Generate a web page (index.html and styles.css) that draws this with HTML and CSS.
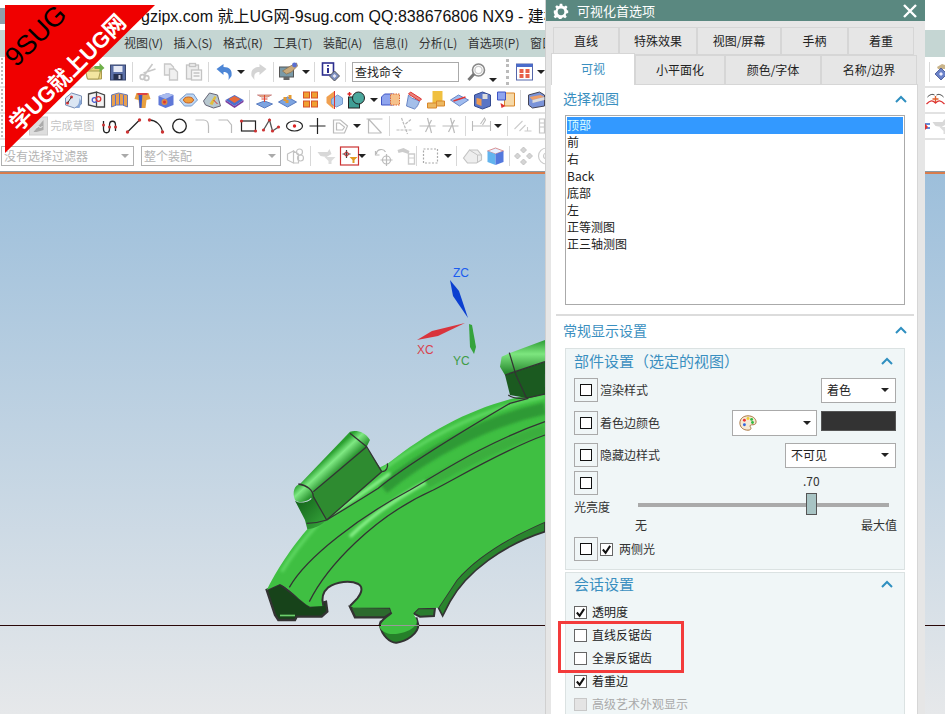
FILE: index.html
```html
<!DOCTYPE html>
<html lang="zh">
<head>
<meta charset="utf-8">
<title>可视化首选项</title>
<link rel="stylesheet" href="styles.css">
</head>
<body>
<svg class="defs" width="0" height="0">
<defs>
<symbol id="folder" viewBox="0 0 20 20"><path d="M1 7h6l2-2h6l2 3v9H3z" fill="#e8d37a" stroke="#a89a50"/><path d="M1 9h15l-2 8H3z" fill="#f3e6a0" stroke="#a89a50"/><path d="M10 4h5V1l5 5-5 4V7h-5z" fill="#6fb04a"/></symbol>
<symbol id="save" viewBox="0 0 20 20"><rect x="3" y="3" width="15" height="15" fill="#5b6fa6" stroke="#39466e"/><rect x="6" y="4" width="9" height="6" fill="#e6e9f4"/><rect x="6" y="12" width="9" height="6" fill="#26304e"/><rect x="11" y="13" width="2" height="4" fill="#ccd"/></symbol>
<symbol id="cut" viewBox="0 0 20 20" fill="none" stroke="#c8c8c8" stroke-width="1.6"><path d="M15 2 7 13M18 7 6 11"/><circle cx="5" cy="15" r="2.4"/><circle cx="9" cy="16" r="2.4"/></symbol>
<symbol id="copy" viewBox="0 0 20 20" fill="#f0f0f0" stroke="#c8c8c8" stroke-width="1.3"><path d="M4 2h6l3 3v8H4z"/><path d="M9 7h5l3 3v8H9z"/></symbol>
<symbol id="paste" viewBox="0 0 20 20" fill="#eee" stroke="#c4c4c4" stroke-width="1.3"><rect x="3" y="3" width="12" height="14"/><rect x="6" y="1.500" width="6" height="3"/><rect x="8" y="8" width="10" height="10" fill="#f8f8f8"/><path d="M10 11h6M10 14h6"/></symbol>
<symbol id="undo" viewBox="0 0 20 20"><path d="M2 7 9 2v3c6 0 9 3 8 9l-3 4c1-6-1-8-5-8v3z" fill="#4d86d6"/></symbol>
<symbol id="redo" viewBox="0 0 20 20"><path d="M18 7 11 2v3C5 5 2 8 3 14l3 4C5 12 7 10 11 10v3z" fill="#d4d4d4"/></symbol>
<symbol id="monitor" viewBox="0 0 20 20"><rect x="1" y="5" width="14" height="10" fill="#7a9aa8" stroke="#555"/><rect x="5" y="15" width="6" height="3" fill="#666"/><path d="M4 9l8-5 6-3 1 3-6 6-5 2z" fill="#c9a97a" stroke="#8a6f4a" stroke-width=".7"/><circle cx="16" cy="3" r="2.400" fill="#5a6fd0"/></symbol>
<symbol id="info" viewBox="0 0 20 20"><rect x="2" y="1" width="11" height="12" fill="#fff" stroke="#2d2f8f" stroke-width="1.6"/><path d="M7.500 3v1.500M7.500 6v5" stroke="#2d2f8f" stroke-width="2"/><path d="M9 14l5-5 5 5-5 5z" fill="#7c8fc0" stroke="#555"/><path d="M12 14l2-2 2 2-2 2z" fill="#e8e8f4"/></symbol>
<symbol id="diam" viewBox="0 0 12 20"><path d="M4 5l5-3 3 1v4H5z" fill="#c9b48a"/><path d="M2 12l6-6 6 6-6 6z" fill="#6a82c8" stroke="#3f4f90" stroke-width=".8"/><path d="M6 12l2-2 2 2-2 2z" fill="#eef"/></symbol>
<symbol id="lens" viewBox="0 0 20 20" fill="none"><circle cx="12" cy="8" r="6" stroke="#888" stroke-width="1.600"/><circle cx="12" cy="8" r="3.600" stroke="#ccc" stroke-width="1.400"/><path d="M7.500 12 2 18" stroke="#777" stroke-width="3"/></symbol>
<symbol id="win" viewBox="0 0 20 20"><rect x="2" y="2" width="16" height="16" fill="#fff" stroke="#5566aa"/><rect x="2" y="2" width="16" height="3" fill="#4a6ccc"/><path d="M5 7h4v4H5zM11 7h4v4h-4zM5 12h4v4H5zM11 12h4v4h-4z" fill="#e8604a"/></symbol>
<symbol id="b1" viewBox="0 0 20 20"><path d="M2 8l6-5 10 3v8l-7 4-9-3z" fill="#dbe6f3" stroke="#7a8fb5"/><circle cx="8" cy="7" r="1.500" fill="#d33"/><circle cx="4" cy="13" r="1.500" fill="#d33"/><path d="M8 7 4 13" stroke="#444"/><path d="M12 18c3-3 4-6 4-10l2 4-2 6z" fill="#88a8d8"/></symbol>
<symbol id="b2" viewBox="0 0 20 20" fill="none" stroke="#444" stroke-width="1.300"><path d="M2 4l8-2v15l-8-2zM10 2l8 3v12l-8-0z" fill="#f3f3f3"/><circle cx="8" cy="10" r="2.300" stroke="#4a5fd0"/><circle cx="12" cy="9" r="2.300" stroke="#d33"/></symbol>
<symbol id="b3" viewBox="0 0 20 20"><path d="M2 5l7-2 9 2v12l-5-2H7l-5 2z" fill="#e8a050" stroke="#6678b5"/><path d="M6 5v10M10 4v11M14 5v10" stroke="#5a6fd0"/></symbol>
<symbol id="b4" viewBox="0 0 20 20"><path d="M4 3h12l2 6-4 1-1 8H7l-1-8-4-1z" fill="#e8a040"/><path d="M6 3h4l-1 15H7z" fill="#3a57c0"/><path d="M5 3h10v2H5z" fill="#d44"/></symbol>
<symbol id="b5" viewBox="0 0 20 20"><path d="M3 6l9-3 6 2v10l-8 3-7-3z" fill="#5f78d8"/><path d="M3 6l7 3 8-4-6-2z" fill="#a9bbee"/><circle cx="9" cy="12" r="3" fill="#d84"/><circle cx="9" cy="12" r="1.500" fill="#d33"/></symbol>
<symbol id="b6" viewBox="0 0 20 20"><path d="M1 10l7-6h7l4 6-6 6H6z" fill="#bcd7f4" stroke="#7799cc"/><ellipse cx="10" cy="10" rx="5" ry="3" fill="#f0a040" stroke="#c86020"/></symbol>
<symbol id="b7" viewBox="0 0 20 20"><path d="M2 11 8 3l8 2 3 11-7 2-8-3z" fill="#b8c8d0" stroke="#667"/><path d="M8 14l5-8 2 1-4 8z" fill="#e0c040"/><path d="M12 10l4 4" stroke="#d33"/></symbol>
<symbol id="b8" viewBox="0 0 20 20"><path d="M1 10l9-5 9 5-9 6z" fill="#4a6fd0"/><path d="M4 9l6-3 6 3-6 4z" fill="#e86a3a"/><path d="M1 10v2l9 6 9-6v-2l-9 6z" fill="#7a3fa0"/></symbol>
<symbol id="b9" viewBox="0 0 20 20"><path d="M2 14l8-3 8 3-8 4z" fill="#7da4e0" stroke="#5a7cc0"/><path d="M3 5h14l-4 2H7z" fill="#f0b070" stroke="#c88"/><path d="M10 5v7M7 9h6" stroke="#d43"/></symbol>
<symbol id="b10" viewBox="0 0 20 20"><path d="M1 12l9-5 9 5-9 5z" fill="#7da4e0" stroke="#5a7cc0"/><path d="M6 7h3v4H6zM11 5h3v4h-3zM8 10h3v3H8z" fill="#e59a30"/></symbol>
<symbol id="b11" viewBox="0 0 20 20" fill="#f0a030" stroke="#d8502a"><rect x="3" y="2" width="6" height="6"/><rect x="11" y="2" width="6" height="6"/><rect x="3" y="11" width="6" height="6"/><rect x="11" y="11" width="6" height="6"/></symbol>
<symbol id="b12" viewBox="0 0 20 20"><path d="M11 1l-1 18-7-6v-6z" fill="#f0a050"/><path d="M8 9l6-4 5 3v6l-6 3-5-3z" fill="#9cc0ec" stroke="#7799cc"/><path d="M11 1v18" stroke="#d33"/></symbol>
<symbol id="b13" viewBox="0 0 20 20"><path d="M3 2v4M1 4h4" stroke="#d22" stroke-width="1.400"/><rect x="2" y="7" width="11" height="11" fill="#3f9d94" stroke="#222"/><circle cx="12" cy="8" r="6" fill="#4aa79c" stroke="#222"/></symbol>
<symbol id="b14" viewBox="0 0 20 20"><path d="M1 7l3-3h9v11H1z" fill="#8ea4ee" stroke="#3f55c5"/><rect x="10" y="4" width="9" height="11" fill="#f6c18a" stroke="#d63" stroke-dasharray="1.500 1"/></symbol>
<symbol id="b15" viewBox="0 0 20 20"><path d="M5 5 3 16l8 3c3-2 4-5 5-8L8 8z" fill="#a4bfea" stroke="#6a86c5"/><path d="M7 2l11 7-2 2L5 4z" fill="#e8837a" stroke="#d33"/></symbol>
<symbol id="b16" viewBox="0 0 20 20"><path d="M6 1h10v12H6z" fill="#f0c040"/><path d="M1 13h9v5H1zM10 11h8v5h-8z" fill="#ecb860" stroke="#d8862a"/></symbol>
<symbol id="b17" viewBox="0 0 20 20"><path d="M1 10l8-5 10 5-9 6z" fill="#9fbcf0" stroke="#6a86c5"/><path d="M4 11l12-4" stroke="#d33" stroke-width="1.600"/></symbol>
<symbol id="b18" viewBox="0 0 20 20"><path d="M2 5l8-3 8 3v11l-8 3-8-3z" fill="#5a75c5" stroke="#334a90"/><path d="M4 8l5 1v7l-5-2z" fill="#ef9a50"/><path d="M10 4h5v5h-5z" fill="#ddd"/></symbol>
<symbol id="b19" viewBox="0 0 20 20"><path d="M9 3h10v13H9z" fill="#f6d9a8" stroke="#d8862a"/><path d="M2 2h8v8H2z" fill="#8ea4ee" stroke="#3f55c5"/><path d="M5 13l5 3-4 2z" fill="#d33"/></symbol>
<symbol id="b20" viewBox="0 0 20 20"><path d="M2 5l11-3 5 3v11l-12 2-4-3z" fill="#7a93d8" stroke="#445"/><path d="M3 7l11-2 4 2-12 3z" fill="#efa06a"/><path d="M6 10l12-3v3L6 13z" fill="#ddd"/></symbol>
<symbol id="flag" viewBox="0 0 20 20"><rect x="1" y="1" width="18" height="18" fill="#ddd" stroke="#ccc"/><path d="M5 16 15 4v10l-7 2z" fill="#aaa"/><path d="M8 12l2-2 2 2 2-2" stroke="#eee" fill="none"/></symbol>
<symbol id="spline" viewBox="0 0 20 20"><path d="M3 5v8c0 5 6 5 6 0V9c0-5 6-5 6 0v6" fill="none" stroke="#222" stroke-width="1.300"/><circle cx="3" cy="9" r="1.500" fill="#c33"/><circle cx="9" cy="11" r="1.500" fill="#c33"/><circle cx="15" cy="11" r="1.500" fill="#c33"/></symbol>
<symbol id="line" viewBox="0 0 20 20"><path d="M4 16 16 4" stroke="#222" stroke-width="1.200"/><circle cx="4" cy="16" r="1.700" fill="#c33"/><circle cx="16" cy="4" r="1.700" fill="#c33"/></symbol>
<symbol id="arc" viewBox="0 0 20 20"><path d="M3 4c6 0 12 5 13 12" fill="none" stroke="#222" stroke-width="1.300"/><circle cx="3" cy="4" r="1.700" fill="#c33"/><circle cx="16" cy="16" r="1.700" fill="#c33"/></symbol>
<symbol id="circle" viewBox="0 0 20 20"><circle cx="10" cy="10" r="6.800" fill="none" stroke="#222" stroke-width="1.300"/></symbol>
<symbol id="fillet" viewBox="0 0 20 20"><path d="M3 4h8c4 0 5 3 5 6v7" fill="none" stroke="#bbb" stroke-width="1.200"/></symbol>
<symbol id="chamfer" viewBox="0 0 20 20"><path d="M3 4h9l4 5v8" fill="none" stroke="#bbb" stroke-width="1.200"/></symbol>
<symbol id="rect" viewBox="0 0 20 20"><rect x="3" y="5" width="14" height="10" fill="none" stroke="#222" stroke-width="1.200"/><circle cx="3" cy="5" r="1.600" fill="#c33"/><circle cx="17" cy="15" r="1.600" fill="#c33"/></symbol>
<symbol id="poly" viewBox="0 0 20 20"><path d="M2 14 8 4l3 11 6-4" fill="none" stroke="#555" stroke-width="1.300"/><circle cx="2" cy="14" r="1.600" fill="#c33"/><circle cx="8" cy="4" r="1.600" fill="#c33"/><circle cx="11" cy="15" r="1.600" fill="#c33"/><circle cx="17" cy="11" r="1.600" fill="#c33"/></symbol>
<symbol id="ellipse" viewBox="0 0 20 20"><ellipse cx="10" cy="10" rx="8" ry="5" fill="none" stroke="#222" stroke-width="1.200"/><circle cx="10" cy="10" r="1.700" fill="#d22"/></symbol>
<symbol id="cross" viewBox="0 0 20 20"><path d="M10 2v16M2 10h16" stroke="#222" stroke-width="1.200"/></symbol>
<symbol id="offset" viewBox="0 0 20 20" fill="none" stroke="#bbb" stroke-width="1.200"><path d="M3 4h7l7 6-3 7H3z"/><path d="M6 7h3l5 4-2 3H6z"/></symbol>
<symbol id="trim" viewBox="0 0 20 20" fill="none" stroke="#bbb" stroke-width="1.200"><path d="M2 3h16M4 3v14h13M4 3l13 14"/></symbol>
<symbol id="x1" viewBox="0 0 20 20" fill="none" stroke="#bbb" stroke-width="1.200"><path d="M2 14h16M7 2l6 16M11 8l6-5" stroke-dasharray="3 1"/></symbol>
<symbol id="x2" viewBox="0 0 20 20" fill="none" stroke="#bbb" stroke-width="1.200"><path d="M2 10h16M10 2l4 15M14 4l-6 12"/></symbol>
<symbol id="dim" viewBox="0 0 20 20" fill="none" stroke="#bbb" stroke-width="1.100"><path d="M1 5v10M19 5v10M1 10h18M9 8l4-6 1 2-3 5"/></symbol>
<symbol id="perp" viewBox="0 0 20 20" fill="none" stroke="#ccc" stroke-width="1.100"><path d="M2 13l8-8M7 15l6-6M12 15h7M15 11v4"/></symbol>
<symbol id="layers" viewBox="0 0 20 20" fill="none" stroke="#c4c4c4" stroke-width="1.200"><path d="M4 3h5v14H4zM4 7h5M4 11h5"/><path d="M11 3h6M11 10h6v7h-6z" stroke-dasharray="2 1"/></symbol>
<symbol id="parts" viewBox="0 0 20 20" fill="none" stroke="#c4c4c4" stroke-width="1.200"><path d="M2 8l6-3v12l-6-3zM8 5l5 3v9H8z"/><circle cx="14" cy="6" r="3"/><circle cx="15" cy="12" r="3"/></symbol>
<symbol id="funnel" viewBox="0 0 20 20"><path d="M1 6h10l2-3 2 5-5 3-6-1z" fill="#d8d8d8"/><path d="M8 11h11l-4 4v3h-3v-3z" fill="#ddd"/></symbol>
<symbol id="boxfilter" viewBox="0 0 20 20"><rect x="1" y="1" width="18" height="18" fill="#fff" stroke="#c33" stroke-width="1.200"/><path d="M7 4v8M3 8h8" stroke="#444" stroke-width="1.200"/><circle cx="7" cy="8" r="2" fill="none" stroke="#c33"/><path d="M10 11h8l-3 3v3h-2v-3z" fill="#e29a20"/></symbol>
<symbol id="rotpt" viewBox="0 0 20 20" fill="none" stroke="#bbb" stroke-width="1.200"><path d="M3 8c0-5 7-6 9-2"/><path d="M2 5v4h4" /><circle cx="13" cy="14" r="4"/><path d="M13 8v12M7 14h12"/></symbol>
<symbol id="robot" viewBox="0 0 20 20"><path d="M1 4l6-2 6 3-1 3-6-2-4 1z" fill="#ccc"/><path d="M12 8h6v10h-6z" fill="none" stroke="#ccc" stroke-width="1.400"/><path d="M12 12h6" stroke="#ccc"/></symbol>
<symbol id="dash" viewBox="0 0 20 20"><rect x="3" y="3" width="14" height="14" fill="none" stroke="#aaa" stroke-width="1.200" stroke-dasharray="2 1.500"/></symbol>
<symbol id="eraser" viewBox="0 0 20 20"><path d="M1 12 7 4h8l4 5v5l-5 3H5z" fill="#eee" stroke="#c4c4c4" stroke-width="1.200"/><path d="M7 4l8 5v8M15 9l4 0" fill="none" stroke="#c4c4c4"/></symbol>
<symbol id="cube" viewBox="0 0 20 20"><path d="M2 5l8-3 8 3-8 3z" fill="#e8f0ff" stroke="#c66" stroke-width=".7"/><path d="M2 5l8 3v11l-8-3z" fill="#62b4ee"/><path d="M18 5l-8 3v11l8-3z" fill="#5378dd"/></symbol>
<symbol id="diamonds" viewBox="0 0 20 20" fill="#d4d4d4" stroke="#bbb" stroke-width=".8"><path d="M10 1l3 3-3 3-3-3zM10 13l3 3-3 3-3-3zM4 7l3 3-3 3-3-3zM16 7l3 3-3 3-3-3z"/></symbol>
<symbol id="swirl" viewBox="0 0 20 20" fill="none" stroke="#ccc" stroke-width="1.200"><circle cx="10" cy="10" r="8"/><circle cx="10" cy="10" r="3"/></symbol>
<symbol id="cmp" viewBox="0 0 20 20"><path d="M2 7c3-3 5-3 7-2M11 5c2-1 4-1 7 2" stroke="#333" fill="none"/><path d="M10 6v6M7 9h6" stroke="#e0602a" stroke-width="1.400"/><path d="M1 14c4-4 6-4 9-1 3-3 5-3 9 1" stroke="#d33" stroke-width="1.300" fill="none"/></symbol>
<symbol id="star" viewBox="0 0 8 20"><path d="M0 8h8M0 12h8" stroke="#36c" stroke-width="1.500"/><path d="M0 4l6 7-6 6z" fill="#d33"/></symbol>
<symbol id="pal" viewBox="0 0 20 20"><path d="M10 2c5 0 9 3 9 7 0 3-3 3-5 3-2 0-2 2-1 3 1 2-1 3-3 3-5 0-9-3-9-8s4-8 9-8z" fill="#f5e8d4" stroke="#a06a30"/><circle cx="6" cy="7" r="1.600" fill="#e33"/><circle cx="10" cy="5" r="1.600" fill="#ec3"/><circle cx="14" cy="6" r="1.600" fill="#3b4"/><circle cx="15" cy="9.500" r="1.600" fill="#3b4"/><circle cx="6" cy="12" r="1.600" fill="#36d"/></symbol>
</defs>
</svg>

<div class="app">
  <header class="titlebar"><span class="app-icon"></span><span class="title-text">gzipx.com 就上UG网-9sug.com QQ:838676806 NX9 - 建模</span></header>
  <nav class="menubar">
    <span>视图(V)</span><span>插入(S)</span><span>格式(R)</span><span>工具(T)</span><span>装配(A)</span><span>信息(I)</span><span>分析(L)</span><span>首选项(P)</span><span>窗口(O)</span>
  </nav>

  <div class="toolbar tb1">
    <svg class="ic"><use href="#folder"/></svg><svg class="ic"><use href="#save"/></svg><i class="sep"></i>
    <svg class="ic"><use href="#cut"/></svg><svg class="ic"><use href="#copy"/></svg><svg class="ic"><use href="#paste"/></svg><i class="sep"></i>
    <svg class="ic"><use href="#undo"/></svg><b class="caret"></b><svg class="ic"><use href="#redo"/></svg><i class="sep"></i>
    <svg class="ic"><use href="#monitor"/></svg><b class="caret"></b><i class="sep"></i>
    <svg class="ic"><use href="#info"/></svg><i class="sep"></i>
    <div class="search">查找命令</div>
    <svg class="ic"><use href="#lens"/></svg><b class="caret low"></b><i class="grip"></i>
    <svg class="ic"><use href="#win"/></svg><b class="caret"></b>
    <div class="edge flush"><i class="sep"></i><svg class="diam"><use href="#diam"/></svg></div>
  </div>

  <div class="toolbar tb2">
    <svg class="ic"><use href="#b1"/></svg><svg class="ic"><use href="#b2"/></svg><svg class="ic"><use href="#b3"/></svg><svg class="ic"><use href="#b4"/></svg><svg class="ic"><use href="#b5"/></svg><svg class="ic"><use href="#b6"/></svg><svg class="ic"><use href="#b7"/></svg><svg class="ic"><use href="#b8"/></svg><i class="sep"></i>
    <svg class="ic"><use href="#b9"/></svg><svg class="ic"><use href="#b10"/></svg><svg class="ic"><use href="#b11"/></svg><svg class="ic"><use href="#b12"/></svg><svg class="ic"><use href="#b13"/></svg><b class="caret"></b>
    <svg class="ic"><use href="#b14"/></svg><svg class="ic"><use href="#b15"/></svg><svg class="ic"><use href="#b16"/></svg><svg class="ic"><use href="#b17"/></svg><svg class="ic"><use href="#b18"/></svg><svg class="ic"><use href="#b19"/></svg><i class="sep"></i>
    <svg class="ic"><use href="#b20"/></svg>
    <div class="edge"><svg class="ic"><use href="#cmp"/></svg></div>
  </div>

  <div class="toolbar tb3">
    <svg class="ic"><use href="#flag"/></svg><span class="finish">完成草图</span>
    <svg class="ic"><use href="#spline"/></svg><svg class="ic"><use href="#line"/></svg><svg class="ic"><use href="#arc"/></svg><svg class="ic"><use href="#circle"/></svg><svg class="ic"><use href="#fillet"/></svg><svg class="ic"><use href="#chamfer"/></svg><svg class="ic"><use href="#rect"/></svg><svg class="ic"><use href="#poly"/></svg><svg class="ic"><use href="#ellipse"/></svg><svg class="ic"><use href="#cross"/></svg><svg class="ic"><use href="#offset"/></svg><b class="caret"></b>
    <svg class="ic"><use href="#trim"/></svg><i class="sep"></i>
    <svg class="ic"><use href="#x1"/></svg><svg class="ic"><use href="#x2"/></svg><svg class="ic"><use href="#x2"/></svg><i class="sep"></i>
    <svg class="ic"><use href="#dim"/></svg><b class="caret"></b><i class="sep"></i>
    <svg class="ic"><use href="#perp"/></svg><svg class="ic"><use href="#layers"/></svg>
    <div class="edge far"><svg class="mark"><use href="#star"/></svg><svg class="ic"><use href="#funnel"/></svg></div>
  </div>

  <div class="toolbar tb4">
    <div class="filter f1">没有选择过滤器<b class="caret pale"></b></div>
    <div class="filter f2">整个装配<b class="caret pale"></b></div>
    <svg class="ic"><use href="#parts"/></svg><i class="sep"></i>
    <svg class="ic"><use href="#funnel"/></svg><svg class="ic"><use href="#boxfilter"/></svg><b class="caret tight"></b>
    <svg class="ic"><use href="#rotpt"/></svg><svg class="ic"><use href="#robot"/></svg><i class="sep s-a"></i>
    <svg class="ic"><use href="#dash"/></svg><b class="caret"></b><i class="sep"></i>
    <svg class="ic"><use href="#eraser"/></svg><svg class="ic"><use href="#cube"/></svg><i class="sep s-b"></i>
    <svg class="ic"><use href="#diamonds"/></svg><svg class="ic"><use href="#swirl"/></svg>
  </div>

  <main class="viewport">
    <svg class="scene" viewBox="0 174 945 540">
      <defs>
        <clipPath id="topClip"><path d="M50 330C70 290 110 220 170 150C240 70 330 -10 415 -50C560 -165 700 -235 885 -265L885 125C780 170 680 230 620 300L565 383L505 385L490 400L500 420C505 440 470 462 430 462C405 462 390 450 388 437C392 420 405 415 425 398L420 383L310 383L300 378L322 355C338 335 338 320 325 312C300 300 260 305 235 322C220 335 212 350 220 378L180 380C150 365 120 325 90 312Z"/></clipPath>
        <filter id="soft" x="-20%" y="-20%" width="140%" height="140%"><feGaussianBlur stdDeviation="5"/></filter>
        <linearGradient id="barGrad" x1="0" y1="0" x2="1" y2="1"><stop offset=".4" stop-color="#2aa030"/><stop offset=".47" stop-color="#7fe983"/><stop offset=".58" stop-color="#258f2b"/></linearGradient>
        <linearGradient id="knobGrad" x1="0" y1="0" x2="1" y2="1"><stop offset="0" stop-color="#0f5a16"/><stop offset="1" stop-color="#39ac3e"/></linearGradient>
        <linearGradient id="tabTop" x1="0" y1="0" x2="0" y2="1"><stop offset="0" stop-color="#2f9c35"/><stop offset=".4" stop-color="#7de67f"/><stop offset="1" stop-color="#1f7e26"/></linearGradient>
      </defs>

      <g class="axis">
        <path d="M450 280l9 11 9 27-15-22z" fill="#0b3fd0"/>
        <path d="M465 323l-27 13-21 4 15-9z" fill="#d9343c"/>
        <path d="M469 324l3 1 4 22-2 7-4-7z" fill="#35a33c"/>
        <text class="axis-z" x="453" y="277">ZC</text>
        <text class="axis-x" x="417" y="354">XC</text>
        <text class="axis-y" x="453" y="365">YC</text>
      </g>

      <g transform="translate(250 480) scale(.3333)">
        <path d="M50 330L75 405L85 420L135 420L140 410L215 410L232 395L228 365L180 380L90 312Z" fill="#17431a" stroke="#333" stroke-width="7"/>
        <rect x="90" y="404" width="45" height="5" fill="#6ccf6c"/>
        <path d="M300 380L420 383L426 398L405 412L315 412Z" fill="#2c6a2e" stroke="#333" stroke-width="7"/>
        <path d="M885 125C780 170 680 230 620 300L565 383L578 408L600 365C650 275 760 195 885 155Z" fill="#2a842e" stroke="#333" stroke-width="5"/>
        <path d="M490 400L505 385L555 385L552 408L510 410Z" fill="#2a7c2e" stroke="#333" stroke-width="6"/>
        <path d="M390 437C395 465 420 490 440 488C470 485 505 460 505 435L500 415L392 425Z" fill="#26802a" stroke="#333" stroke-width="6"/>

        <path d="M50 330C70 290 110 220 170 150C240 70 330 -10 415 -50C560 -165 700 -235 885 -265L885 125C780 170 680 230 620 300L565 383L505 385L490 400L500 420C505 440 470 462 430 462C405 462 390 450 388 437C392 420 405 415 425 398L420 383L310 383L300 378L322 355C338 335 338 320 325 312C300 300 260 305 235 322C220 335 212 350 220 378L180 380C150 365 120 325 90 312Z" fill="#3fbf42"/>
        <g clip-path="url(#topClip)">
          <path d="M400 25C520 -75 700 -175 885 -215" fill="none" stroke="#2e9a34" stroke-width="36" filter="url(#soft)"/>
          <path d="M95 275C140 200 240 70 385 -22C530 -130 700 -215 885 -250" fill="none" stroke="#5ed862" stroke-width="10" filter="url(#soft)"/>
          <path d="M240 105C290 70 340 40 420 -20" fill="none" stroke="#8ef58f" stroke-width="10" filter="url(#soft)"/>
          <path d="M300 170C350 120 430 60 530 5" fill="none" stroke="#8ef58f" stroke-width="10" filter="url(#soft)"/>
          <path d="M530 10C640 -50 770 -120 885 -150" fill="none" stroke="#3aae3e" stroke-width="30" filter="url(#soft)"/>
        </g>
        <g fill="none" stroke="#333" stroke-width="3.800">
          <path d="M118 322C170 230 330 110 480 30C560 -15 700 -110 885 -175"/>
          <path d="M178 365C230 260 370 110 550 30C620 -5 760 -90 885 -135"/>
          <path d="M230 120C280 90 330 60 385 25C450 -30 610 -130 780 -230L835 -245"/>
        </g>
        <path d="M220 378C212 350 220 335 235 322C260 305 300 300 325 312C338 320 338 335 322 355L300 378" fill="none" stroke="#333" stroke-width="6"/>
        <path d="M425 398C405 415 392 420 388 437" fill="none" stroke="#333" stroke-width="6"/>

        <path d="M175 40L345 -105L398 -25L225 125Z" fill="#2e8b30"/>
        <path d="M135 60C125 35 135 15 150 12L300 -145C320 -150 345 -145 360 -120L350 -100L190 40C190 60 150 75 135 60Z" fill="url(#barGrad)"/>
        <path d="M135 62C150 75 190 65 190 45L230 120C215 135 195 145 172 148L165 120Z" fill="url(#knobGrad)"/>
        <g fill="none" stroke="#333" stroke-width="3.800">
          <path d="M300 -140L350 -100L395 -25"/>
          <path d="M190 35L350 -100"/>
          <path d="M145 12C170 15 190 30 190 50L230 120"/>
          <path d="M170 130C190 130 215 125 230 120"/>
          <path d="M395 -25C410 -25 415 -40 412 -50"/>
          <path d="M230 120L395 -25"/>
        </g>

        <path d="M750 -340L755 -370L778 -380L885 -420L885 -355L765 -315Z" fill="url(#tabTop)"/>
        <path d="M765 -315L885 -355L885 -258L835 -245L780 -255Z" fill="#1b5a20"/>
        <g fill="none" stroke="#333" stroke-width="3.800">
          <path d="M778 -382L798 -315L830 -245"/>
          <path d="M765 -315L885 -355"/>
          <path d="M775 -255C800 -235 850 -250 885 -258"/>
        </g>
      </g>
      <path class="horizon" d="M0 625.500H945"/>
      <path class="horizon-lit" d="M381 625.500H419"/>
    </svg>
  </main>
</div>

<svg class="banner" viewBox="0 0 160 160">
  <polygon points="5,5 155,5 5,153" fill="#f00000"/>
  <text class="b-black" transform="translate(37 37) rotate(-45)">9SUG</text>
  <text class="b-white" transform="translate(69 74) rotate(-45)">学UG就上UG网</text>
</svg>

<section class="dialog">
  <header class="dlg-title">
    <svg class="gear" viewBox="0 0 20 20"><path d="M8.500 1h3l.5 2.500 2 .9 2.200-1.400 2 2-1.400 2.200.9 2L19 9.500v3l-2.300.5-.9 2 1.400 2.200-2 2-2.200-1.400-2 .9-.5 2.300h-3l-.5-2.300-2-.9-2.200 1.400-2-2 1.400-2.200-.9-2L1 12.500v-3l2.300-.5.900-2L2.800 4.800l2-2L7 4.200l1-.7z" fill="#fff"/><circle cx="10" cy="11" r="4.200" fill="#5a8880"/></svg>
    <span class="dlg-name">可视化首选项</span>
    <svg class="close" viewBox="0 0 14 14"><path d="M1 1l12 12M13 1 1 13" stroke="#fff" stroke-width="2.400"/></svg>
  </header>
  <div class="tabs row-a"><span>直线</span><span>特殊效果</span><span>视图/屏幕</span><span>手柄</span><span>着重</span></div>
  <div class="tabs row-b"><span class="active">可视</span><span>小平面化</span><span>颜色/字体</span><span>名称/边界</span></div>

  <div class="panel">
    <div class="sec-head"><span>选择视图</span><svg class="chev" viewBox="0 0 12 8"><path d="M1 7l5-5 5 5" fill="none" stroke="#2f8fc0" stroke-width="2"/></svg></div>
    <ul class="views">
      <li class="sel">顶部</li><li>前</li><li>右</li><li>Back</li><li>底部</li><li>左</li><li>正等测图</li><li>正三轴测图</li>
    </ul>
    <hr class="rule">
    <div class="sec-head second"><span>常规显示设置</span><svg class="chev" viewBox="0 0 12 8"><path d="M1 7l5-5 5 5" fill="none" stroke="#2f8fc0" stroke-width="2"/></svg></div>

    <div class="group g1">
      <div class="grp-head"><span class="paren">部件设置（选定的视图）</span><svg class="chev" viewBox="0 0 12 8"><path d="M1 7l5-5 5 5" fill="none" stroke="#2f8fc0" stroke-width="2"/></svg></div>
      <div class="row r1"><span class="pin"><i></i></span><label>渲染样式</label><div class="drop d-shade">着色<b class="caret"></b></div></div>
      <div class="row r2"><span class="pin"><i></i></span><label>着色边颜色</label><div class="drop d-color"><svg class="pal"><use href="#pal"/></svg><b class="caret"></b></div><div class="swatch"></div></div>
      <div class="row r3"><span class="pin"><i></i></span><label>隐藏边样式</label><div class="drop d-hide">不可见<b class="caret"></b></div></div>
      <div class="row r4"><span class="pin"><i></i></span><span class="val">.70</span></div>
      <div class="slider">
        <label class="s-label">光亮度</label>
        <div class="track"><span class="thumb"></span></div>
        <div class="s-ends"><span>无</span><span>最大值</span></div>
      </div>
      <div class="row r5"><span class="pin"><i></i></span><span class="chk on"><svg viewBox="0 0 12 12"><path d="M2 6l3 3.500L10 2" fill="none" stroke="#111" stroke-width="2.200"/></svg></span><label class="chk-l">两侧光</label></div>
    </div>

    <div class="group g2">
      <div class="grp-head"><span>会话设置</span><svg class="chev" viewBox="0 0 12 8"><path d="M1 7l5-5 5 5" fill="none" stroke="#2f8fc0" stroke-width="2"/></svg></div>
      <div class="opt"><span class="chk on"><svg viewBox="0 0 12 12"><path d="M2 6l3 3.500L10 2" fill="none" stroke="#111" stroke-width="2.200"/></svg></span><label>透明度</label></div>
      <div class="opt"><span class="chk"></span><label>直线反锯齿</label></div>
      <div class="opt"><span class="chk"></span><label>全景反锯齿</label></div>
      <div class="opt"><span class="chk on"><svg viewBox="0 0 12 12"><path d="M2 6l3 3.500L10 2" fill="none" stroke="#111" stroke-width="2.200"/></svg></span><label>着重边</label></div>
      <div class="opt off"><span class="chk"></span><label>高级艺术外观显示</label></div>
    </div>
  </div>
  <div class="redbox"></div>
</section>
</body>
</html>
```

FILE: styles.css
```css
* { box-sizing: border-box; }
html, body { margin: 0; height: 100%; overflow: hidden; }
body {
  position: relative;
  width: 945px;
  height: 714px;
  background: #fff;
  font: 12px/1.2 "Noto Sans CJK SC", "Liberation Sans", sans-serif;
  color: #222;
}
.defs { position: absolute; }
.app { display: flex; flex-direction: column; height: 714px; }

.titlebar { height: 30px; flex: none; display: flex; align-items: center; white-space: nowrap; overflow: hidden; background: #fff; }
.app-icon { width: 5px; height: 16px; margin-top: 1px; background: #8f9faa; flex: none; }
.title-text { margin-left: 136px; font: 16px "Liberation Sans", "Noto Sans CJK SC", sans-serif; color: #111; }

.menubar { height: 27px; flex: none; display: flex; align-items: center; gap: 10.400px; padding-left: 124px; background: #c5d6d3; white-space: nowrap; color: #333; overflow: hidden; }

.toolbar { flex: none; display: flex; align-items: center; background: #fff; border-bottom: 2px solid #e2e2e2; white-space: nowrap; overflow: hidden; }
.tb1, .tb2, .tb3 { background: radial-gradient(circle, #bbb .8px, transparent 1.100px) 0 0 / 4px 4px repeat-y, #fff; }
.tb1 { height: 31px; padding-left: 82.5px; }
.tb2 { height: 26px; padding-left: 61.5px; }
.tb3 { height: 26px; padding-left: 26.5px; }
.tb4 { height: 34px; padding-left: 1px; border-bottom: 2px solid #d87c4c; box-shadow: inset 0 -1px 0 #8a99a4; }
.ic { width: 23px; height: 20px; flex: none; }
.mark { width: 8px; height: 20px; flex: none; }
.diam { width: 12px; height: 20px; flex: none; }
.sep { width: 1px; height: 20px; margin: 0 3.5px 0 3px; background: #d8d8d8; flex: none; }
.sep.s-a { margin: 0 2.5px 0 -2px; }
.sep.s-b { margin: 0 2px; }
.caret { width: 11px; height: 4px; flex: none; display: flex; justify-content: center; }
.caret::after { content: ""; border: 4px solid transparent; border-top-color: #222; border-bottom: 0; }
.caret.low { margin-top: 16px; }
.caret.pale::after { border-top-color: #aaa; }
.caret.tight { margin-left: -4px; margin-right: 4px; }
.grip { width: 0; height: 26px; margin: 0 4px 0 7px; border-left: 3px dotted #bbb; flex: none; }
.search { width: 107px; height: 20px; margin: 0 5.500px 0 3px; padding: 0 2px; line-height: 18px; border: 1px solid #aaa; color: #222; flex: none; }
.edge { margin-left: auto; display: flex; align-items: center; margin-right: -2px; }
.edge.far { margin-right: -8px; }
.edge.flush { margin-right: 0; }
.finish { width: 49px; padding-left: 1px; font-size: 11px; color: #c4c4c4; flex: none; }
.filter { height: 20px; display: flex; justify-content: space-between; align-items: center; padding: 0 3px 0 2px; border: 1px solid #b0b0b0; color: #b4b4b4; flex: none; }
.f1 { width: 133px; margin-right: 7px; }
.f2 { width: 140px; margin-right: 3px; }

.viewport { flex: 1; position: relative; background: linear-gradient(#9dbfdb, #e6e8ea); }
.scene { position: absolute; inset: 0; width: 100%; height: 100%; }
.axis text { font: 12px "Liberation Sans", sans-serif; }
.axis-z { fill: #1a5cf0; }
.axis-x { fill: #d9434e; }
.axis-y { fill: #3f9c45; }
.horizon { stroke: #2a0808; stroke-width: 1; }
.horizon-lit { stroke: #999; stroke-width: 1; }

.banner { position: absolute; left: 0; top: 0; width: 160px; height: 160px; }
.b-black { font: 27px "Liberation Sans", sans-serif; fill: #000; text-anchor: middle; dominant-baseline: middle; }
.b-white { font: bold 22px "Liberation Sans", "Noto Sans CJK SC", sans-serif; fill: #fff; text-anchor: middle; dominant-baseline: middle; }

.dialog { position: absolute; left: 545px; top: 0; width: 380px; height: 714px; background: #e6e6e6; border-left: 1px solid #d0d0d0; overflow: hidden; }
.dlg-title { height: 21px; display: flex; align-items: center; padding: 0 7px; background: #5a8880; color: #fff; }
.gear { width: 16px; height: 16px; flex: none; }
.dlg-name { margin-left: 8px; font-size: 13px; }
.close { width: 14px; height: 14px; margin-left: auto; margin-right: 1px; flex: none; }

.tabs { display: grid; margin-left: 7px; }
.tabs span { display: flex; align-items: center; justify-content: center; color: #222; border: 1px solid #d6d6d6; background: #e6e6e6; }
.row-a { height: 28px; margin-top: 6px; grid-template-columns: 66px 78px 84px 67px 66px; }
.row-b { height: 29px; margin-left: 5px; grid-template-columns: 84px 90px 96px 96px; }
.tabs .active { background: #fff; color: #3a8fc0; margin-top: -2px; height: 32px; position: relative; z-index: 1; border-bottom: 0; }

.panel { width: 367px; height: 630px; margin-left: 5px; background: #fff; border-right: 1px solid #d6d6d6; overflow: hidden; }
.sec-head { height: 31px; display: flex; align-items: center; justify-content: space-between; padding: 0 10px 2px 12px; font-size: 14px; color: #3a8fc0; }
.sec-head.second { height: 32px; padding-bottom: 4px; }
.chev { width: 12px; height: 8px; flex: none; }
.views { list-style: none; width: 340px; height: 190px; margin: 0 0 0 14px; padding: 1px; border: 1px solid #aaa; background: #fff; }
.views li { height: 17px; line-height: 16px; color: #222; }
.views .sel { background: #3399ff; color: #dff; }
.rule { height: 2px; width: 358px; margin: 9px 0 0 5px; border: 0; background: #dcdcdc; }

.group { width: 340px; margin-left: 14px; background: #f0f6f7; border: 1px solid #dbe2e2; padding: 0 8px; }
.g1 { height: 222px; }
.g2 { height: 160px; margin-top: 2px; }
.grp-head { height: 26px; display: flex; align-items: center; justify-content: space-between; padding: 0 3px 2px 0; font-size: 15px; color: #3a8fc0; }
.paren { font-family: "Noto Sans CJK TC", "Noto Sans CJK SC", sans-serif; }
.g2 .grp-head { height: 24px; margin-bottom: 4px; }

.row { display: flex; align-items: center; height: 24px; }
.r1 { margin-top: 3px; }
.r2 { margin-top: 9px; }
.r3 { margin-top: 8px; }
.r4 { margin-top: 4px; }
.row label { margin-left: 2px; color: #333; }
.pin { width: 24px; height: 24px; display: flex; align-items: center; justify-content: center; border: 1px solid #aaa; flex: none; }
.pin i { width: 12px; height: 12px; border: 1.500px solid #111; background: #fff; display: block; }
.drop { height: 25px; display: flex; align-items: center; justify-content: space-between; padding: 0 5px; margin-left: auto; background: #fff; border: 1px solid #aaa; color: #222; flex: none; }
.d-shade { width: 75px; }
.d-color { width: 85px; height: 26px; margin-right: 4px; padding-right: 4px; }
.d-hide { width: 111px; }
.pal { width: 18px; height: 18px; margin-left: 1px; }
.swatch { width: 75px; height: 20px; margin-top: -5px; background: #333; border: 1px solid #555; flex: none; }
.val { margin-left: 205px; margin-top: -4px; color: #333; }

.slider { display: grid; grid-template-columns: 64px 251px; grid-template-rows: 26px 16px; height: 42px; }
.s-label { align-self: end; margin-bottom: 7px; color: #333; }
.track { position: relative; height: 4px; margin-top: 8px; background: #aaa; }
.thumb { position: absolute; left: 168px; top: -10px; width: 11px; height: 22px; background: #a8c4c4; border: 1px solid #555; }
.s-ends { grid-column: 1 / 3; display: flex; justify-content: space-between; padding-left: 61px; margin: -3px -8px 0 0; color: #333; }

.chk { width: 13px; height: 13px; margin-left: 2px; display: block; border: 1px solid #666; background: #fff; flex: none; }
.chk svg { display: block; width: 11px; height: 11px; }
.row .chk-l { margin-left: 6px; }
.opt { display: flex; align-items: center; height: 23px; }
.opt .chk { margin-left: 0; }
.opt label { margin-left: 5px; color: #222; }
.opt.off .chk { background: #e4e4e4; border-color: #c8c8c8; }
.opt.off label { color: #aaa; }

.redbox { position: absolute; left: 12px; top: 621px; width: 126px; height: 52px; border: 3px solid #f33b3b; }
```
